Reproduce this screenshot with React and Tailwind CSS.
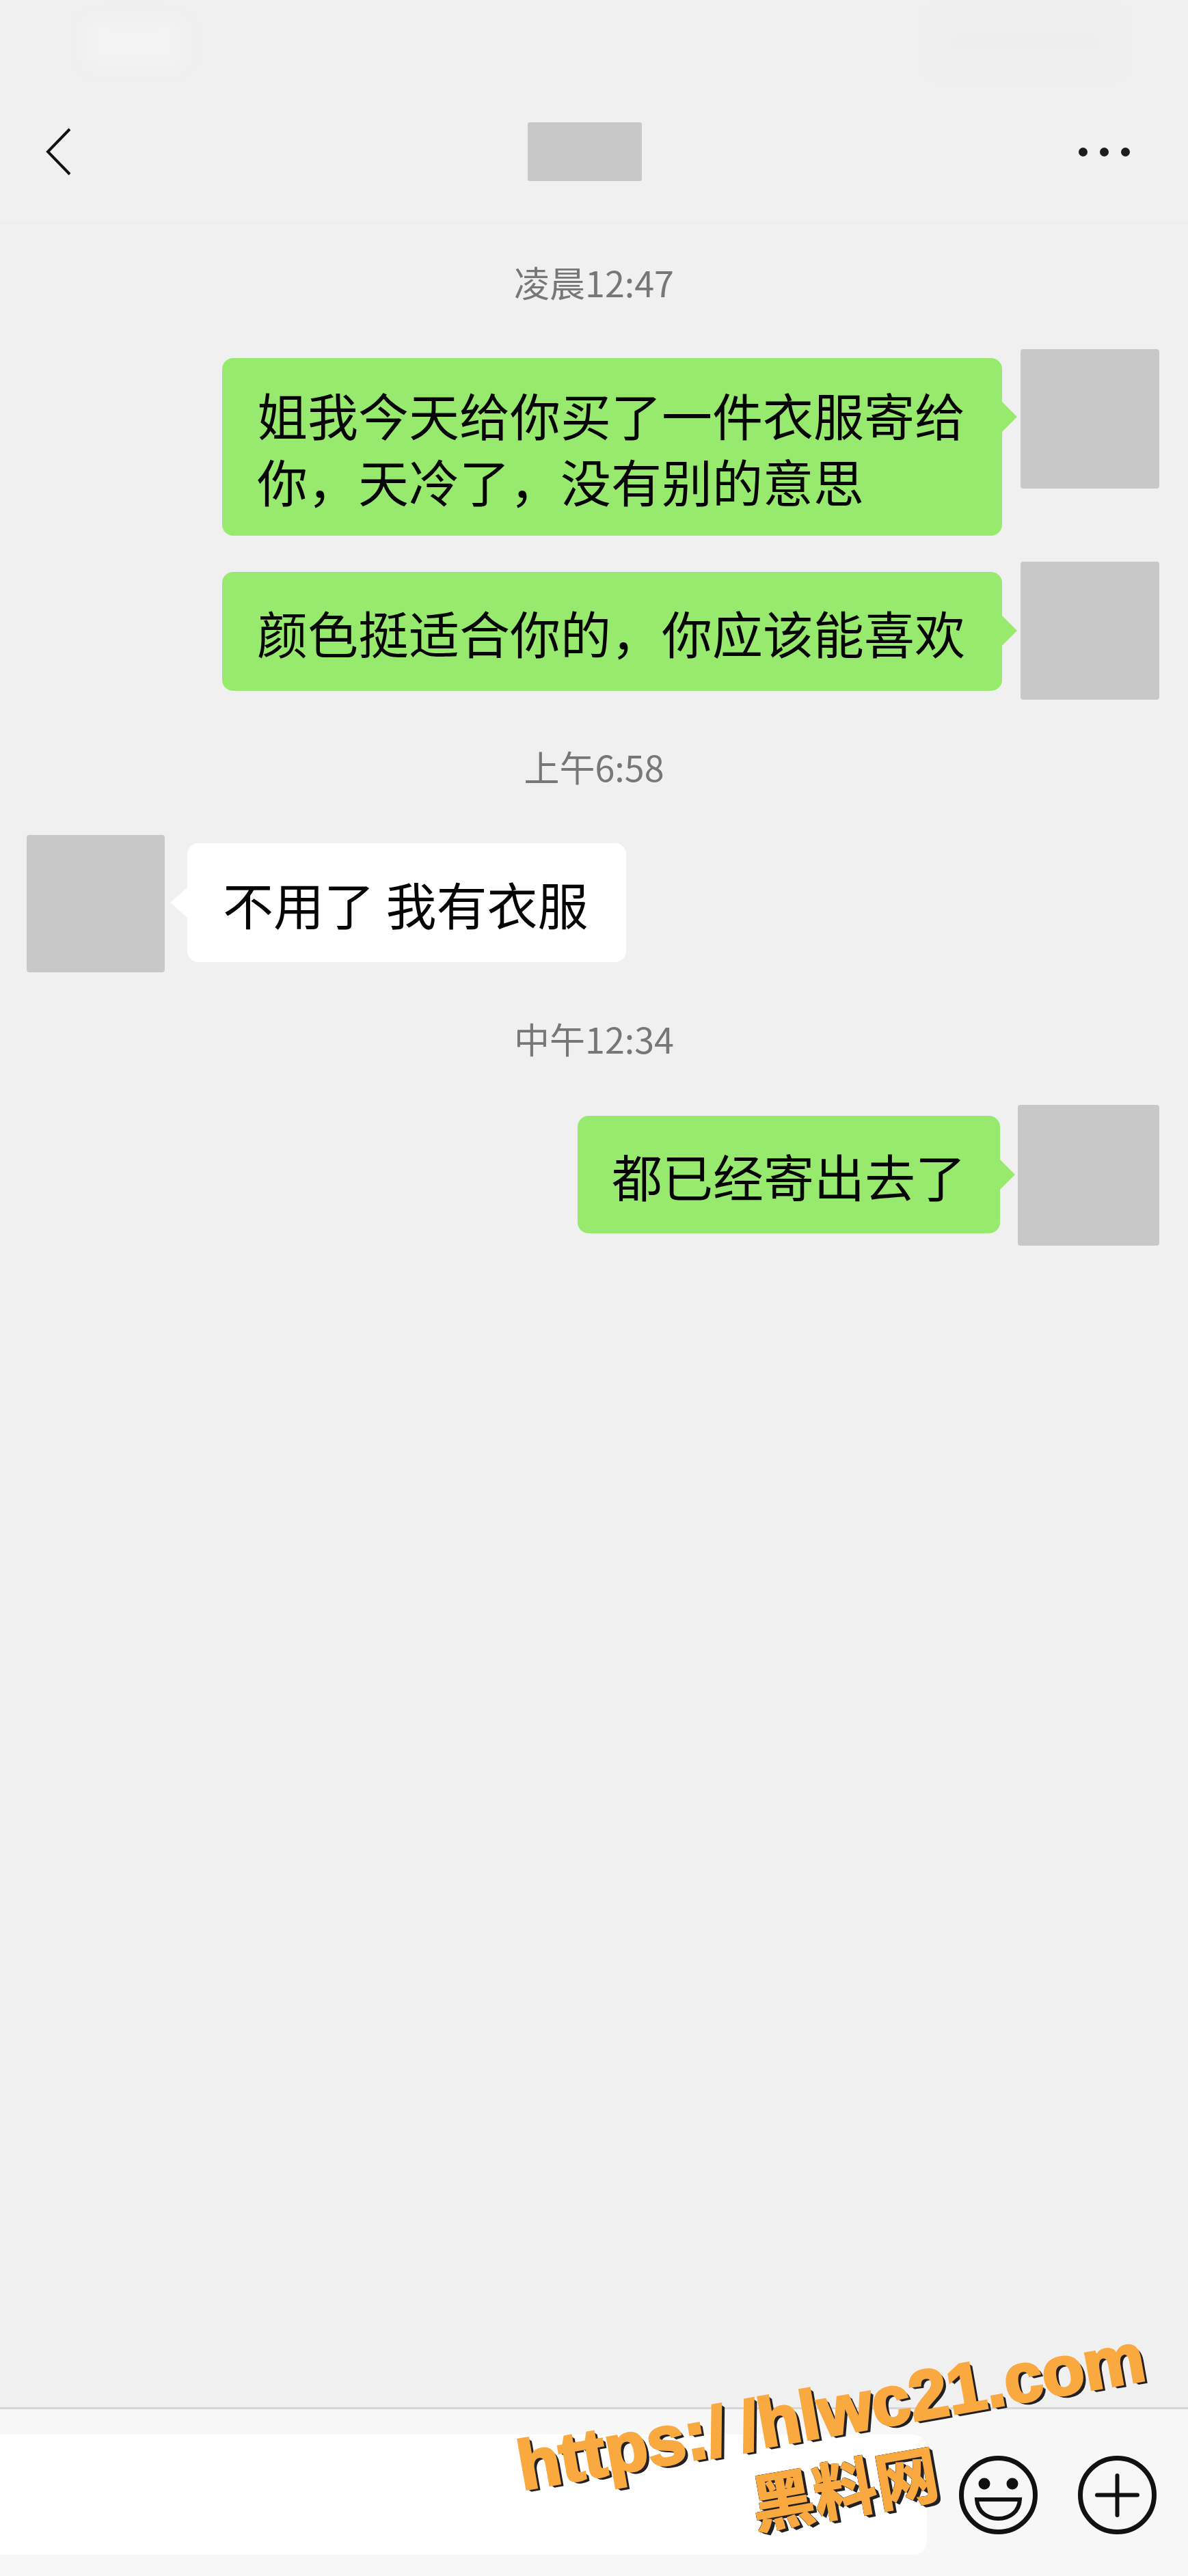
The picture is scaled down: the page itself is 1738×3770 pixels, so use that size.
import React from "react";

const Time = ({ text, className }) => (
  <div className={`h-[50px] text-center text-[52px] leading-[50px] text-[#777] ${className}`}>
    {text}
  </div>
);

const Avatar = ({ className }) => <div className={`shrink-0 rounded-[4px] bg-[#c8c8c8] ${className}`}></div>;

// green bubble on the right, tail points at the avatar
const MyBubble = ({ children, className }) => (
  <div className={`relative flex items-center rounded-[16px] bg-[#98ea6f] text-[74px] leading-[97px] text-[#050505] ${className}`}>
    {children}
    <div className="absolute top-[64px] right-[-22px] h-[44px] w-[22px] bg-[#98ea6f] [clip-path:polygon(0_0,100%_50%,0_100%)]"></div>
  </div>
);

const SmileIcon = () => (
  <svg width="115" height="115" viewBox="0 0 115 115" fill="none" stroke="#111" className="shrink-0">
    <circle cx="57.5" cy="57.5" r="54" strokeWidth="7" />
    <circle cx="37" cy="41" r="8.5" fill="#111" stroke="none" />
    <circle cx="78" cy="41" r="8.5" fill="#111" stroke="none" />
    <path d="M26 64H89C88 82 74 92 57.5 92C41 92 27 82 26 64Z" strokeWidth="6" />
  </svg>
);

const PlusIcon = () => (
  <svg width="115" height="115" viewBox="0 0 115 115" fill="none" stroke="#111" className="shrink-0">
    <circle cx="57.5" cy="57.5" r="54" strokeWidth="7" />
    <path d="M28 57.5H87M57.5 29V87" strokeWidth="6" strokeLinecap="round" />
  </svg>
);

const App = () => {
  return (
    <div className="relative flex h-[3770px] w-[1738px] flex-col overflow-hidden bg-[#f0f0f0] font-['Noto_Sans_CJK_SC',sans-serif]">
      {/* blurred out status bar */}
      <div className="absolute top-[30px] left-[130px] h-[65px] w-[135px] bg-[#f3f3f3] blur-md"></div>
      <div className="absolute top-[25px] left-[1370px] h-[75px] w-[260px] bg-[#eeeeee] blur-md"></div>

      {/* header */}
      <div className="h-[327px] shrink-0 border-b border-[#ebebeb] pt-[179px]">
        <div className="flex h-[86px] items-center">
          <svg width="40" height="72" viewBox="0 0 40 72" fill="none" stroke="#111" strokeWidth="4" className="ml-[65px] shrink-0">
            <polyline points="37,3 5,36 37,69" />
          </svg>
          <div className="ml-[667px] h-[86px] w-[167px] rounded-[3px] bg-[#c8c8c8]"></div>
          <div className="mr-[85px] ml-auto flex gap-[18px]">
            <div className="h-[13px] w-[13px] rounded-full bg-[#1c1c1c]"></div>
            <div className="h-[13px] w-[13px] rounded-full bg-[#1c1c1c]"></div>
            <div className="h-[13px] w-[13px] rounded-full bg-[#1c1c1c]"></div>
          </div>
        </div>
      </div>

      {/* messages */}
      <div className="flex flex-col">
        <Time text="凌晨12:47" className="mt-[61px]" />

        <div className="mt-[73px] flex h-[273px] items-start justify-end gap-[27px] pr-[42px]">
          <MyBubble className="mt-[13px] h-[260px] w-[1141px] pl-[51px]">
            <div className="w-[1040px]">姐我今天给你买了一件衣服寄给你，天冷了，没有别的意思</div>
          </MyBubble>
          <Avatar className="h-[204px] w-[203px]" />
        </div>

        <div className="mt-[38px] flex h-[202px] items-start justify-end gap-[27px] pr-[42px]">
          <MyBubble className="mt-[15px] h-[174px] w-[1141px] pl-[51px]">颜色挺适合你的，你应该能喜欢</MyBubble>
          <Avatar className="h-[202px] w-[203px]" />
        </div>

        <Time text="上午6:58" className="mt-[73px]" />

        <div className="mt-[75px] flex h-[201px] items-start gap-[33px] pl-[39px]">
          <Avatar className="h-[201px] w-[202px]" />
          <div className="relative mt-[12px] flex h-[174px] w-[642px] items-center rounded-[16px] bg-white pl-[52px] text-[74px] leading-[97px] text-[#050505]">
            不用了 我有衣服
            <div className="absolute top-[65px] left-[-25px] h-[44px] w-[25px] bg-white [clip-path:polygon(100%_0,0_50%,100%_100%)]"></div>
          </div>
        </div>

        <Time text="中午12:34" className="mt-[72px]" />

        <div className="mt-[72px] flex h-[206px] items-start justify-end gap-[26px] pr-[42px]">
          <MyBubble className="mt-[16px] h-[172px] w-[618px] pl-[50px]">都已经寄出去了</MyBubble>
          <Avatar className="h-[206px] w-[207px]" />
        </div>
      </div>

      {/* input bar */}
      <div className="mt-auto flex h-[247px] shrink-0 items-start border-t-[3px] border-[#d6d6d6] bg-[#f7f7f7] pt-[37px]">
        <div className="h-[176px] w-[1356px] rounded-r-[20px] bg-white"></div>
        <div className="mt-[31px] ml-[47px] flex gap-[59px]">
          <SmileIcon />
          <PlusIcon />
        </div>
      </div>

      {/* site watermark */}
      <div className="absolute top-[3472px] left-[725px] w-[1000px] -rotate-10 text-center font-bold text-[#f9a93f] [text-shadow:1px_1px_0_#222,-1px_-1px_0_#222,2px_2px_0_#222,3px_3px_0_#222,4px_4px_0_#222,5px_5px_0_#222,-1px_1px_0_#222,1px_-1px_0_#222]">
        <div className="font-['Liberation_Sans',sans-serif] text-[101px] leading-[112px] [-webkit-text-stroke:4px_#f9a93f]">
          https:/<span className="ml-[20px]">/</span>hlwc21.com
        </div>
        <div className="font-['Noto_Sans_CJK_SC',sans-serif] text-[92px] leading-[108px] [-webkit-text-stroke:2px_#f9a93f]">黑料网</div>
      </div>
    </div>
  );
};

export default App;
